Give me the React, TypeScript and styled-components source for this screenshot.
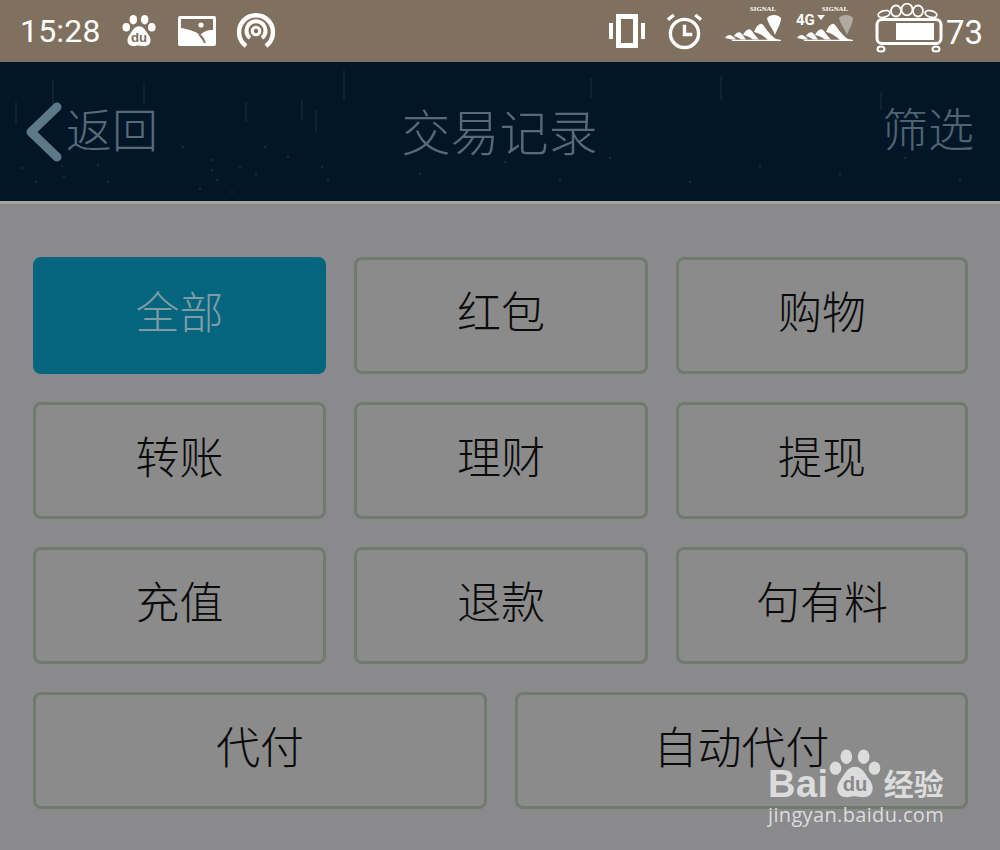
import React from 'react'
import styled, { createGlobalStyle } from 'styled-components'

const GlobalStyle = createGlobalStyle`
  html, body {
    margin: 0;
    padding: 0;
    background: #8a898b;
  }
`

const CJK = `"Noto Sans CJK SC", "Noto Sans", sans-serif`

const Page = styled.div`
  position: relative;
  width: 1000px;
  height: 850px;
  overflow: hidden;
  background: #8a898b;
  font-family: ${CJK};
`

// status bar
const StatusBar = styled.div`
  height: 62px;
  background: #80705f;
  display: flex;
  align-items: center;
  justify-content: space-between;
  padding: 0 17px 0 20px;
  color: #fff;
  box-sizing: border-box;
`

const StatusGroup = styled.div`
  display: flex;
  align-items: center;
`

const Clock = styled.span`
  flex: none;
  width: 102px;
  font-family: Roboto, sans-serif;
  font-size: 32px;
  letter-spacing: 0.2px;
`

const Battery = styled.span`
  font-family: Roboto, sans-serif;
  font-size: 33px;
  margin-left: 1px;
  margin-top: 2px;
`

const Icon = styled.svg<{ $gap?: number; $lift?: number }>`
  display: block;
  flex: none;
  margin-right: ${({ $gap }) => $gap || 0}px;
  margin-bottom: ${({ $lift }) => $lift || 0}px;
`

// nav bar
const NavBar = styled.div`
  position: relative;
  height: 139px;
  background: #031628;
  display: flex;
  align-items: center;
  justify-content: space-between;
  padding: 0 26px 0 25px;
  color: #566b7a;
`

const Rain = styled.svg`
  position: absolute;
  left: 0;
  top: 0;
`

const Back = styled.div`
  position: relative;
  display: flex;
  align-items: center;
  width: 133px;
  font-size: 46px;
  font-weight: 300;
  line-height: 60px;
`

const BackLabel = styled.span`
  padding-bottom: 10px;
`

const Title = styled.div`
  position: relative;
  font-size: 49px;
  font-weight: 300;
  line-height: 60px;
  padding-bottom: 4px;
`

const Filter = styled.div`
  position: relative;
  width: 133px;
  text-align: right;
  font-size: 46px;
  font-weight: 300;
  line-height: 60px;
  color: #4f6472;
  padding-bottom: 12px;
`

const NavRule = styled.div`
  height: 3px;
  background: #a3a5a6;
`

// filter grid
const Options = styled.div`
  display: flex;
  flex-direction: column;
  gap: 28px;
  padding: 53px 32px 0 33px;
`

const OptionRow = styled.div<{ $cols: string }>`
  display: grid;
  grid-template-columns: ${({ $cols }) => $cols};
  gap: 28px;
`

const Option = styled.div<{ $active?: boolean }>`
  height: 117px;
  box-sizing: border-box;
  display: flex;
  align-items: center;
  justify-content: center;
  padding-bottom: 11px;
  border-radius: 8px;
  border: 3px solid ${({ $active }) => ($active ? '#04657f' : '#707b70')};
  background: ${({ $active }) => ($active ? '#04657f' : '#8a8b8a')};
  color: ${({ $active }) => ($active ? '#7f9ca5' : '#0a0a0a')};
  font-size: 44px;
  font-weight: 300;
`

// watermark
const Watermark = styled.div`
  position: absolute;
  left: 768px;
  top: 742px;
  width: 180px;
  color: #dcdcdd;
`

const MarkRow = styled.div`
  display: flex;
  align-items: flex-end;
  height: 58px;
`

const MarkBai = styled.span`
  font-family: "Liberation Sans", sans-serif;
  font-size: 38px;
  font-weight: 700;
  line-height: 32px;
  letter-spacing: 0.5px;
`

const MarkCn = styled.span`
  font-size: 30px;
  font-weight: 700;
  line-height: 36px;
  margin-left: 3px;
`

const MarkUrl = styled.div`
  font-family: "Open Sans", sans-serif;
  font-size: 20px;
  line-height: 26px;
  margin-top: 2px;
  letter-spacing: 0.35px;
  white-space: nowrap;
`

const rows = [
  ['全部', '红包', '购物'],
  ['转账', '理财', '提现'],
  ['充值', '退款', '句有料'],
  ['代付', '自动代付'],
]

const specks = [
  [22, 106], [36, 120], [64, 115], [98, 103], [108, 120], [62, 104], [183, 85], [212, 98], [217, 118],
  [232, 130], [200, 127], [212, 108], [256, 112], [288, 95], [322, 105], [328, 118], [265, 85], [240, 105],
  [420, 112], [505, 100], [560, 118], [610, 96], [690, 120], [760, 104], [840, 112], [905, 96], [960, 118],
]

const streaks = [
  [15, 40, 22], [52, 18, 30], [143, 20, 22], [245, 40, 20], [301, 38, 20], [315, 48, 22], [343, 8, 30],
  [720, 14, 24], [880, 30, 18], [590, 16, 20],
]

function PawIcon({ size, gap, fill = '#fff', cut = '#80705f' }: { size: number; gap?: number; fill?: string; cut?: string }) {
  return (
    <Icon $gap={gap} width={size} height={size} viewBox="0 0 36 36">
      <ellipse cx="12" cy="6" rx="4" ry="5" fill={fill} />
      <ellipse cx="24" cy="6" rx="4" ry="5" fill={fill} />
      <ellipse cx="4.500" cy="14" rx="4" ry="4.600" fill={fill} />
      <ellipse cx="31.500" cy="14" rx="4" ry="4.600" fill={fill} />
      <path d="M18 13c5 0 7 5 10 9 4 5 3 13-6 12-3-.3-5-1-8 0-9 1-10-7-6-12 3-4 5-9 10-9z" fill={fill} />
      <text x="18" y="30" textAnchor="middle" fontSize="14" fontWeight="700" fontFamily="Liberation Sans, sans-serif" fill={cut}>
        du
      </text>
    </Icon>
  )
}

function SignalIcon({ dim, fourG }: { dim?: boolean; fourG?: boolean }) {
  return (
    <Icon $gap={fourG ? 21 : 14} $lift={14} width="58" height="36" viewBox="0 0 58 36">
      <text x="26" y="5" fontSize="6.800" fontWeight="700" fontFamily="Liberation Serif, serif" fill="#fff">
        SIGNAL
      </text>
      {fourG && (
        <>
          <text x="0" y="19" fontSize="15" fontWeight="700" fontFamily="Roboto, sans-serif" fill="#fff">
            4G
          </text>
          <path d="M21 9h8l-4 5z" fill="#fff" />
        </>
      )}
      <path d="M43 12C46 8 54 8 57 12 57 18 53 23 51 29 49 23 44 18 43 12z" fill={dim ? '#b3aa9f' : '#fff'} />
      <g fill="#fff">
        <path d="M1 32C3 29 6 28 8 30 10 31 11 32 12 33.500H8C6 33 4 32.500 1 32z" />
        <path d="M10 30C12 27 15 25 17 27 19 29 20 31 22 33.500H17C15 32 13 31 10 30z" />
        <path d="M19 29C21 25 24 22 27 24 29 26 31 30 35 33.500H29C26 31 23 30 19 29z" />
        <path d="M30 26C32 21 35 17 38 18 41 20 44 28 52 33L56 34H44C40 30 35 27 30 26z" />
        <path d="M8 33.800H57V35H8z" />
      </g>
    </Icon>
  )
}

export default function App() {
  return (
    <Page>
      <GlobalStyle />
      <StatusBar>
        <StatusGroup>
          <Clock>15:28</Clock>
          <PawIcon size={34} gap={22} />
          <Icon $gap={21} width="38" height="30" viewBox="0 0 38 30">
            <rect width="38" height="30" rx="2" fill="#fff" />
            <path d="M3 3H35V14C29 14 25 16 22 19 17 15 10 13 3 12z" fill="#80705f" />
            <circle cx="23" cy="9" r="2.600" fill="#fff" />
            <path d="M21 18C24 21 26 24 27 27" fill="none" stroke="#80705f" strokeWidth="2" />
          </Icon>
          <Icon width="38" height="38" viewBox="0 0 38 38" fill="none" stroke="#fff">
            <path d="M9 34a17 17 0 1 1 20 0" strokeWidth="4.500" />
            <path d="M13 26a9.500 9.500 0 1 1 12 0" strokeWidth="4" />
            <circle cx="19" cy="19" r="3.800" strokeWidth="3" />
          </Icon>
        </StatusGroup>
        <StatusGroup>
          <Icon $gap={21} width="36" height="34" viewBox="0 0 36 34">
            <path d="M0 9h4v16H0zM32 9h4v16h-4z" fill="#fff" />
            <path fillRule="evenodd" d="M7 0h22v34H7zM12 5v24h12V5z" fill="#fff" />
          </Icon>
          <Icon $gap={21} width="37" height="37" viewBox="0 0 38 38" fill="none" stroke="#fff">
            <circle cx="19" cy="21" r="14.500" strokeWidth="3.500" />
            <path d="M19 12v10h8" strokeWidth="3.500" />
            <path d="M2 7l6-5M36 7l-6-5" strokeWidth="3.500" />
          </Icon>
          <SignalIcon />
          <SignalIcon dim fourG />
          <Icon width="70" height="56" viewBox="0 0 70 56">
            <g fill="none" stroke="#fff" strokeWidth="1.800">
              <ellipse cx="9" cy="11" rx="6" ry="3.200" transform="rotate(-15 9 11)" />
              <ellipse cx="21" cy="8" rx="5" ry="5.500" />
              <ellipse cx="32" cy="6.500" rx="5.500" ry="5.800" />
              <ellipse cx="43" cy="8" rx="5" ry="5.500" />
              <ellipse cx="56" cy="11" rx="6" ry="3.200" transform="rotate(15 56 11)" />
              <rect x="2" y="16.500" width="64" height="24" rx="5" strokeWidth="3" />
              <ellipse cx="6" cy="46" rx="3.500" ry="2.500" strokeWidth="2" />
              <ellipse cx="61" cy="46" rx="3.500" ry="2.500" strokeWidth="2" />
            </g>
            <rect x="21" y="20" width="38" height="17" fill="#fff" />
          </Icon>
          <Battery>73</Battery>
        </StatusGroup>
      </StatusBar>

      <NavBar>
        <Rain width="1000" height="139" viewBox="0 0 1000 139">
          {streaks.map(([x, y, h]) => (
            <rect key={`${x}-${y}`} x={x} y={y} width="2" height={h} fill="#1b3040" opacity="0.45" />
          ))}
          {specks.map(([x, y]) => (
            <circle key={`${x}-${y}`} cx={x} cy={y} r="1.300" fill="#16293a" />
          ))}
        </Rain>
        <Back>
          <Icon $gap={3} width="38" height="60" viewBox="0 0 38 60">
            <path d="M32 5L6 30l26 25" fill="none" stroke="#5d7888" strokeWidth="9" strokeLinecap="round" strokeLinejoin="round" />
          </Icon>
          <BackLabel>返回</BackLabel>
        </Back>
        <Title>交易记录</Title>
        <Filter>筛选</Filter>
      </NavBar>
      <NavRule />

      <Options>
        {rows.map(row => (
          <OptionRow key={row[0]} $cols={row.length === 3 ? '293px 294px 292px' : '454px 453px'}>
            {row.map(label => (
              <Option key={label} $active={label === '全部'}>
                {label}
              </Option>
            ))}
          </OptionRow>
        ))}
      </Options>

      <Watermark>
        <MarkRow>
          <MarkBai>Bai</MarkBai>
          <PawIcon size={52} fill="#dcdcdd" cut="#8a898b" />
          <MarkCn>经验</MarkCn>
        </MarkRow>
        <MarkUrl>jingyan.baidu.com</MarkUrl>
      </Watermark>
    </Page>
  )
}
